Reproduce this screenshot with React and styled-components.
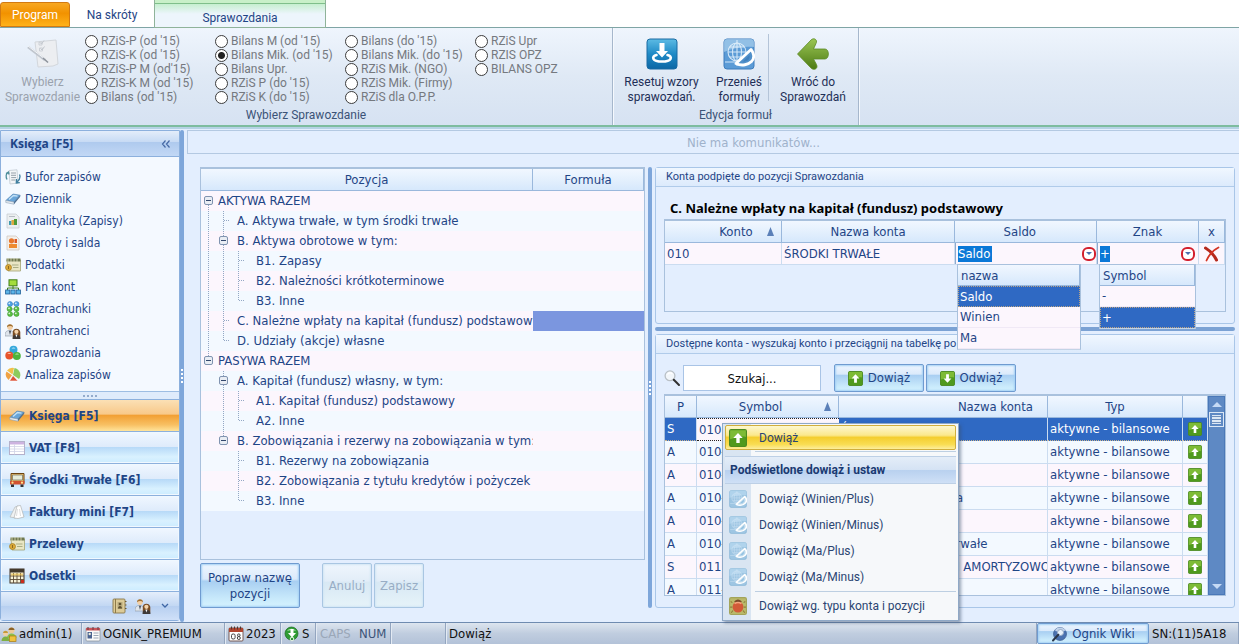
import React from 'react';
import styled, { createGlobalStyle, css } from 'styled-components';

const tahoma = '"DejaVu Sans Condensed", Tahoma, "DejaVu Sans", sans-serif';
const segoe = 'Roboto, "Segoe UI", "Open Sans", sans-serif';
const ink = '#1f4586';

const Global = createGlobalStyle`
  *, *::before, *::after { box-sizing: border-box; }
  body { margin: 0; font: 13px/16px ${tahoma}; color: ${ink}; background: #e3eefe; }
  button, input { font: inherit; color: inherit; margin: 0; }
  button { padding: 0; cursor: default; }
  table { border-collapse: separate; border-spacing: 0; table-layout: fixed; width: 100%; }
  svg { display: block; flex: none; }
`;

/* ---------- icons ---------- */

const Svg = ({ s = 16, children, v = 16 }) => (
  <svg width={s} height={s} viewBox={`0 0 ${v} ${v}`} aria-hidden="true">{children}</svg>
);

const BufferIcon = () => (
  <Svg>
    <path d="M4 1.500 12 .8 13 14 5 15z" fill="#f4f6f8" stroke="#b9c3cc" strokeWidth=".7" />
    <path d="M6 4h5M6 6.300h5M6.200 8.600h5M6.300 11h4" stroke="#8a959f" strokeWidth=".9" />
    <path d="M3.500 3.500C.5 4 .8 8 2 10.500M1 4.500 3.500 3 4 5.500" fill="none" stroke="#4f8f9b" strokeWidth="1.300" />
    <path d="M14.500 5.500C16 9 14.500 11 12 13M11.500 10 11.300 14l3.500-.3" fill="none" stroke="#3f7f9f" strokeWidth="1.300" />
  </Svg>
);
const BookIcon = () => (
  <Svg>
    <path d="M.8 9.500 8 3l7.200 1.200L9 11z" fill="#69a5d8" stroke="#4d7fae" strokeWidth=".6" />
    <path d="M.8 9.500 9 11v2.200L.8 11.500z" fill="#e9eef3" stroke="#8b9fb5" strokeWidth=".6" />
    <path d="M9 11l6.200-6.800v1.600L9 13.200z" fill="#4c6e93" />
    <path d="M4 8.500 8.500 4.500l4 .7" stroke="#c4e2f7" fill="none" strokeWidth="1.300" />
  </Svg>
);
const ChartDocIcon = () => (
  <Svg>
    <path d="M2 1h9l3 3v11H2z" fill="#eceff1" stroke="#c9ced3" strokeWidth=".8" />
    <path d="M4 8h2.500v4H4z" fill="#3f9bb0" />
    <path d="M6.500 7H9v5H6.500z" fill="#e0a83d" />
    <path d="M9 6h3v6H9z" fill="#4f9a3c" />
    <path d="M4 3.500h6" stroke="#b6bdc4" />
  </Svg>
);
const BalanceIcon = () => (
  <Svg>
    <path d="M2 1h9l3 3v11H2z" fill="#f3efe9" stroke="#cfc9c3" strokeWidth=".8" />
    <circle cx="6.500" cy="5.800" r="2.600" fill="#e8772c" />
    <path d="M4 9h8v4H4z" fill="#ee8a2f" />
    <path d="M9.500 4H12v4H9.500z" fill="#dc5a26" />
  </Svg>
);
const TaxIcon = () => (
  <Svg>
    <path d="M2 3h13.500v11H3z" fill="#e9e6c4" stroke="#a3a373" strokeWidth=".8" />
    <path d="M1.500 1.500h14v3h-14z" fill="#6f7850" />
    <path d="M3 1v4M6 1v4M9 1v4M12 1v4" stroke="#e2e0bb" strokeWidth=".8" />
    <path d="M7 8h6.500M8 10.500h5.500" stroke="#a9ad84" />
    <circle cx="3.500" cy="10.500" r="3" fill="#dba938" stroke="#a37b23" strokeWidth=".7" />
    <path d="M3.500 9v3" stroke="#8c6a20" />
  </Svg>
);
const PlanIcon = () => (
  <Svg>
    <rect x="4" y=".8" width="8" height="6" fill="#a4dd3c" stroke="#3f7d18" />
    <path d="M8 7v3M2.500 11V9h11v2" fill="none" stroke="#3f7d18" />
    <g fill="#5db4e8" stroke="#1d5e97" strokeWidth=".8">
      <rect x=".6" y="11" width="4.200" height="4" /><rect x="5.900" y="11" width="4.200" height="4" /><rect x="11.200" y="11" width="4.200" height="4" />
    </g>
  </Svg>
);
const BallsIcon = () => (
  <Svg>
    <path d="M5 3h6M5 8h6M5 13h6" stroke="#9aa" />
    <g fill="#4fa3e6" stroke="#2c72b8" strokeWidth=".5"><circle cx="5" cy="3" r="2.500" /><circle cx="11.500" cy="3" r="2.500" /></g>
    <g fill="#5cc043" stroke="#35902a" strokeWidth=".5"><circle cx="4.500" cy="8" r="2.500" /><circle cx="11.500" cy="8" r="2.500" /><circle cx="5" cy="13" r="2.500" /><circle cx="11.500" cy="13" r="2.500" /></g>
    <g fill="#fff" opacity=".8"><circle cx="4.300" cy="2.300" r=".9" /><circle cx="10.800" cy="2.300" r=".9" /><circle cx="4" cy="7.300" r=".9" /><circle cx="11" cy="7.300" r=".9" /><circle cx="4.300" cy="12.300" r=".9" /><circle cx="10.800" cy="12.300" r=".9" /></g>
  </Svg>
);
const PeopleIcon = () => (
  <Svg>
    <path d="M0 12.500c0-4 2-5 4.500-5s4 1 4.500 4v1.500H0z" fill="#dfe5ec" stroke="#8a95a2" strokeWidth=".6" />
    <path d="M3.800 7.800 5 12l1.200-4.200z" fill="#555d68" />
    <circle cx="5" cy="4.300" r="2.700" fill="#f2cfa5" />
    <path d="M2 4.300C1.600.2 8.300.2 8 4.300 6.500 2.800 4 2.600 2 4.300z" fill="#a2702f" />
    <path d="M7.800 14.500V9c0-4.500 7-4.500 7.500 0v5.500z" fill="#7a4c22" />
    <circle cx="11.400" cy="8.800" r="2.100" fill="#f4d4ac" />
    <path d="M7.500 16c0-3.200 1.500-4.300 3.900-4.300S15.500 12.800 15.500 16z" fill="#3f3a38" />
    <path d="M10.400 11.500 11.400 14.500l1.100-3z" fill="#fff" />
  </Svg>
);
const ReportsIcon = () => (
  <Svg>
    <circle cx="8.500" cy="4.800" r="4" fill="#34a8dc" /><circle cx="4.300" cy="10.500" r="4" fill="#e8542c" /><circle cx="11.800" cy="11" r="4" fill="#4db43c" />
    <path d="M6.500 3.500c1-1.500 3-1.500 4 0z" fill="#c7ebfa" /><path d="M2.300 9c1-1.500 3-1.500 4 0z" fill="#f9c3ae" /><path d="M10 9.500c1-1.500 3-1.500 4 0z" fill="#c8efbd" />
  </Svg>
);
const PieIcon = () => (
  <Svg>
    <path d="M7.500 7.500 2 3.500A7 7 0 0 1 9 1z" fill="#f2c04a" />
    <path d="M8 8 9.500 1a7 7 0 0 1 4.500 11z" fill="#8ccb5c" />
    <path d="M7 8.300 1.500 4.500a7 7 0 0 0 2 8.500z" fill="#f0a243" />
    <path d="M8 8.500 13 14H4.500z" fill="#dc5237" stroke="#fff" strokeWidth=".6" />
  </Svg>
);
const VatIcon = () => (
  <Svg>
    <rect x=".5" y="1.500" width="15" height="13" fill="#fff" stroke="#b4b1cb" />
    <path d="M1 2h14v2.500H1z" fill="#cdb3e0" />
    <path d="M1 6.500h14M1 9h14M1 11.500h14M5.500 4.500v10" stroke="#d0d3e6" strokeWidth=".8" />
  </Svg>
);
const BusIcon = () => (
  <Svg>
    <path d="M2 1.500h13v10H2z" fill="#eec069" stroke="#6b4313" />
    <path d="M3.500 3h10v5h-10z" fill="#e6ecda" stroke="#6c6c62" strokeWidth=".7" />
    <path d="M1 9h14.500v3.500H1z" fill="#d2532f" />
    <path d="M2 12.500h3V15H2zM11.500 12.500h3V15h-3z" fill="#333" />
    <circle cx="3.500" cy="10.700" r="1.100" fill="#ffe58b" /><circle cx="13" cy="10.700" r="1.100" fill="#ffe58b" />
  </Svg>
);
const InvoiceIcon = () => (
  <Svg>
    <path d="M1 13 6 3l3-1L7 14z" fill="#f0f2f2" stroke="#b5b9b9" strokeWidth=".7" />
    <path d="M5 14 8 2l3.500-.5L15 13l-6 1.500z" fill="#fff" stroke="#b0b3b3" strokeWidth=".7" />
    <path d="M8.500 5 7.500 12M10.500 5l1 7" stroke="#d5d7d7" strokeWidth=".8" />
  </Svg>
);
const CalendarGridIcon = () => (
  <Svg>
    <rect x="1" y="1" width="14" height="14" fill="#f7f2d8" stroke="#3f3022" />
    <path d="M1 1h14v3.500H1z" fill="#43392c" />
    <path d="M4.500 5v10M8 5v10M11.500 5v10M1 8h14M1 11.500h14" stroke="#5b4b36" strokeWidth=".9" />
    <path d="M2 5.500h12v2H2z" fill="#e9c04f" opacity=".7" /><path d="M12 12h3v3h-3z" fill="#cc2d1c" />
  </Svg>
);
const AddressIcon = () => (
  <Svg>
    <rect x="2" y="1" width="12" height="14" rx="1" fill="#dccb98" stroke="#8a784a" strokeWidth=".9" />
    <path d="M4.500 1v14" stroke="#8d7a48" /><path d="M14 3.500h1.500M14 7h1.500M14 10.500h1.500" stroke="#6d5b30" strokeWidth="1.200" />
    <rect x="6.500" y="4" width="5" height="7" fill="#b7aa7c" />
    <circle cx="9" cy="6" r="1.300" fill="#5f5130" /><path d="M7 10.500c0-3.500 4-3.500 4 0z" fill="#5f5130" />
  </Svg>
);
const AdminIcon = () => (
  <Svg>
    <circle cx="10.500" cy="4.500" r="3" fill="#eec998" /><path d="M7.500 4c0-3.500 6-3.500 6 0z" fill="#8c6326" />
    <path d="M6 12c0-6 9-6 9.500 0z" fill="#8fbf45" />
    <circle cx="4.500" cy="7.500" r="2.500" fill="#f2d0a4" /><path d="M2 7c.3-3 4.800-3 5 0z" fill="#c59a3c" />
    <path d="M.5 15c0-6 8-6 8 0z" fill="#7fb043" /><rect x="8.500" y="10" width="6.500" height="5.500" fill="#f0c23e" stroke="#a97c12" strokeWidth=".7" />
  </Svg>
);
const FirmIcon = () => (
  <Svg>
    <rect x="1" y="2" width="14" height="13" rx="1" fill="#fafafa" stroke="#8c95a0" strokeWidth=".8" />
    <path d="M1 2h14v2.500H1z" fill="#c9565a" /><path d="M3 1v3M13 1v3M8 1v3" stroke="#6c3940" />
    <rect x="2.500" y="6" width="4.500" height="6.500" fill="#4a6390" /><circle cx="4.700" cy="8" r="1.200" fill="#eed" />
    <path d="M8.500 7h5M8.500 9.500h5M8.500 12h5" stroke="#9aa6b5" />
  </Svg>
);
const DateIcon = () => (
  <Svg>
    <rect x="1" y="2" width="14" height="13" rx="1" fill="#fff" stroke="#6b4c45" strokeWidth=".9" />
    <path d="M1 2h14v4H1z" fill="#b2452f" /><path d="M3.500 .5v3M6.500 .5v3M9.500 .5v3M12.500 .5v3" stroke="#54362f" />
    <rect x="3.500" y="8" width="3.600" height="5" rx="1.500" fill="none" stroke="#444" />
    <circle cx="10.800" cy="9.200" r="1.300" fill="none" stroke="#444" /><circle cx="10.800" cy="12" r="1.500" fill="none" stroke="#444" />
  </Svg>
);
const SyncIcon = () => (
  <Svg>
    <circle cx="7.500" cy="7.500" r="6.500" fill="#2f9c33" stroke="#17681d" strokeWidth=".7" />
    <path d="M3 5c2-3 7-3 9 0-2-1-7-1-9 0z" fill="#a4e5a2" />
    <path d="M6.500 3h3v4h2.500L8 11.500 4 7h2.500z" fill="#fff" /><circle cx="8" cy="13" r="1.800" fill="none" stroke="#e8f5e8" />
  </Svg>
);
const WikiIcon = () => (
  <Svg>
    <circle cx="9" cy="8" r="6.500" fill="#4b72b0" stroke="#2f4f83" strokeWidth=".6" />
    <path d="M4 4c3-4 9-3 11 1-3-1-4 2-7 1S5 6 4 4z" fill="#c3d4ec" />
    <circle cx="9.500" cy="6.500" r="3" fill="#e9f2fb" stroke="#98aac4" />
    <path d="M7.300 8.800 2 14.500" stroke="#2b3648" strokeWidth="2" strokeLinecap="round" />
  </Svg>
);
const SearchIcon = () => (
  <Svg s={17} v={17}>
    <circle cx="6" cy="5.800" r="4.900" fill="#f2f6fa" stroke="#b9c0c6" strokeWidth="1.300" />
    <path d="M3.500 4.500C4.500 2.500 7 2.300 8.500 4" stroke="#fff" fill="none" strokeWidth="1.200" />
    <path d="M9.800 9.800 15 15" stroke="#303030" strokeWidth="2" strokeLinecap="round" />
  </Svg>
);
const ArrowBox = ({ down, s = 15 }) => (
  <Svg s={s}>
    <rect x=".5" y=".5" width="15" height="15" rx="1.500" fill="#4f9a1d" stroke="#4b8a20" />
    <path d="M1 1h14v6C10 6 6 8 1 9z" fill="#8cc63f" opacity=".75" />
    <path d={down ? 'M6.500 3.500h3V8h2.700L8 12.500 3.800 8h2.700z' : 'M6.500 12.500h3V8h2.700L8 3.500 3.800 8h2.700z'} fill="#fff" />
  </Svg>
);
const RedXIcon = () => (
  <Svg>
    <path d="M1.500 2C5 4 10 9 12.500 14" stroke="#b5281b" strokeWidth="3" fill="none" strokeLinecap="round" />
    <path d="M14.500 1.500C9 4 5 9 2.500 14.500" stroke="#d33423" strokeWidth="1.800" fill="none" strokeLinecap="round" />
  </Svg>
);
const GlobeSheetIcon = ({ s = 18, soft }) => (
  <Svg s={s} v={32}>
    <rect x="1" y="1" width="30" height="30" rx="3" fill={soft ? '#9ec6e3' : '#5b9bd6'} stroke={soft ? '#7fb0d2' : '#3f7dbd'} />
    <path d="M1 14V4a3 3 0 0 1 3-3h24a3 3 0 0 1 3 3v5C20 8 10 10 1 14z" fill="#c0def4" opacity=".55" />
    <g fill="none" stroke="#e8f4fd" strokeWidth="1.100" opacity={soft ? '.5' : '.85'}>
      <circle cx="14" cy="14" r="9" /><ellipse cx="14" cy="14" rx="4.500" ry="9" /><path d="M5 14h18M6.500 9h15M6.500 19h15M14 2v26M2 24h20" />
    </g>
    <path d="M13 25.500 28 11.500c3.500 4 3.500 9 .5 12S19 28.500 13 25.500z" fill={soft ? '#bcd9ec' : '#4f8fca'} stroke="#fff" strokeWidth="2.800" strokeLinejoin="round" />
    <path d="M20 23.500 26.500 17c.8 4.500-2 6.500-6.500 6.500z" fill={soft ? '#8fbfe0' : '#3f80be'} />
  </Svg>
);
const BugIcon = () => (
  <Svg s={18}>
    <rect x=".5" y=".5" width="15" height="15" rx="1.500" fill="#b9b96a" stroke="#a3a45a" />
    <path d="M3 5 1.500 4M13 5l1.500-1M3 9H1M13 9h2M3.500 12 2 14M12.500 12l1.500 2" stroke="#8e7c3a" />
    <ellipse cx="8" cy="8.800" rx="4.800" ry="5" fill="#d25a38" /><path d="M4.500 4.500c1.500-3 5.500-3 7 0z" fill="#7b4b2b" />
    <path d="M5 6c2-1.500 4-1.500 6 0" stroke="#f4a47f" fill="none" strokeWidth="1.200" />
  </Svg>
);
const ResetIcon = () => (
  <Svg s={32} v={32}>
    <defs><linearGradient id="rst" x1="0" y1="0" x2="0" y2="1"><stop offset="0" stopColor="#5dbbe4" /><stop offset=".5" stopColor="#1f8ac6" /><stop offset="1" stopColor="#0c67a5" /></linearGradient></defs>
    <rect x="1" y="1" width="30" height="30" rx="3" fill="url(#rst)" stroke="#1a6ba3" />
    <path d="M13.500 5h5v8h3.500L16 19.500 10 13h3.500z" fill="#fff" />
    <path d="M10.500 17C5 18.500 6 23.500 16 23.500s11-5 5.500-6.500" fill="none" stroke="#fff" strokeWidth="2.600" strokeLinecap="round" />
  </Svg>
);
const BackIcon = () => (
  <Svg s={34} v={34}>
    <defs><linearGradient id="bck" x1="0" y1="0" x2="0" y2="1"><stop offset="0" stopColor="#9bc654" /><stop offset="1" stopColor="#4c7a14" /></linearGradient></defs>
    <path d="M1.500 17 15 3c3-3 7 0 5 3.500L17.500 12H29c4.500 0 4.500 10 0 10H17.500l3 5.500c2 4-2.500 6.500-5.500 3.500z" fill="url(#bck)" stroke="#5c8a24" strokeWidth=".8" />
  </Svg>
);
const ChecklistIcon = () => (
  <Svg s={32} v={32}>
    <path d="M8 4 29 2l2 24-5 2-15 1z" fill="#eceef1" stroke="#d3d7dc" />
    <path d="M12 4h3v3h-3zM12.500 10h3v3h-3z" fill="none" stroke="#ccd0d6" />
    <path d="m13 4.500 1.500 1.500L17 2.500M13.500 10.500l1.500 1.500 2.500-3.500" stroke="#c2c7ce" fill="none" />
    <path d="M1 9 18 22" stroke="#c0c6ce" strokeWidth="2.600" /><path d="m1 8 17 13" stroke="#f3f5f8" /><path d="m16 20 5 4.500" stroke="#8c929b" strokeWidth="1.600" />
  </Svg>
);
const SortUp = () => (
  <svg width="7" height="9" viewBox="0 0 7 9" aria-hidden="true"><path d="M3.500 0 7 9H0z" fill="#5b80b8" /></svg>
);
const Caret = ({ up, c = '#c5daf5', w = 10 }) => (
  <svg width={w} height={w / 2} viewBox="0 0 10 5" aria-hidden="true"><path d={up ? 'M5 0l5 5H0z' : 'M0 0h10L5 5z'} fill={c} /></svg>
);
const Chevrons = () => (
  <Svg s={10} v={10}><path d="M4.500 1.500 1.500 5l3 3.500M8.500 1.500 5.500 5l3 3.500" fill="none" stroke="#4669a5" strokeWidth="1.200" /></Svg>
);

/* ---------- ribbon ---------- */

const Page = styled.div`
  display: flex; flex-direction: column; height: 100vh; min-height: 600px; overflow: hidden;
`;
const Tabs = styled.nav`
  display: flex; align-items: stretch; height: 28px; background: #fff; flex: none;
  border-bottom: 1px solid #7fa5a5; font: 12px/24px ${segoe};
`;
const Tab = styled.button`
  border: 0; background: none; margin-top: 2px; line-height: 26px; width: 84px;
  ${p => p.$kind === 'program' && css`
    width: 70px; color: #fff; line-height: 24px; border: 1px solid #d27a12; border-radius: 3px 3px 0 0;
    background: linear-gradient(#f7a823, #f29200 45%, #ffb21a);
  `}
  ${p => p.$kind === 'active' && css`
    width: 172px; margin: 0 0 -1px; border: 1px solid #8fb39a; border-top: 0;
    background: linear-gradient(#c8f0c8 0 3px, #7fbf8a 3px 4px, #c6efcf 4px, #edf5fc 14px);
    padding-top: 5px;
  `}
`;
const Ribbon = styled.section`
  display: flex; height: 99px; background: linear-gradient(#eff5fd, #dfe9f5 50%, #d6e2f2);
  border-bottom: 2px solid #7dbc9f; box-shadow: 0 2px #b4d2e4; margin-bottom: 3px; flex: none;
  font: 12px/15px ${segoe};
`;
const Group = styled.div`
  display: flex; flex-direction: column; border-right: 1px solid #a6b7cc;
  box-shadow: 1px 0 #f5f9fe; width: ${p => p.$w}px;
`;
const GroupBody = styled.div` display: flex; flex: 1; padding-top: 6px; `;
const GroupLabel = styled.div` text-align: center; line-height: 20px; color: #3b5377; `;
const BigButton = styled.button`
  border: 0; background: none; width: ${p => p.$w}px; display: flex; flex-direction: column;
  align-items: center; line-height: 15px; color: #1e2f57; padding-top: 3px; gap: 4px;
  &:disabled { color: #9aa2ad; }
`;
const BigIcon = styled.span` height: 34px; display: grid; place-items: center; `;
const ThinSep = styled.span` width: 1px; background: #b4c4d8; margin-bottom: 4px; `;
const Radios = styled.fieldset`
  border: 0; margin: 0; padding: 0; display: grid; grid-auto-flow: column;
  grid-template-rows: repeat(5, 14px); grid-auto-columns: 130px;
`;
const Radio = styled.label`
  display: flex; align-items: center; gap: 3px; color: #75797f; line-height: 14px; white-space: nowrap;
  input {
    appearance: none; width: 13px; height: 13px; border: 1px solid #3c3c3c; border-radius: 50%;
    background: #fff; flex: none;
  }
  input:checked { background: radial-gradient(#222 0 3px, #fff 4px); }
`;

/* ---------- sidebar ---------- */

const Body = styled.div` display: flex; flex: 1; min-height: 0; `;
const Sidebar = styled.aside`
  width: 180px; flex: none; display: flex; flex-direction: column; margin-bottom: 1px; font-size: 12px;
  border: 1px solid #8cb0dd; border-radius: 0 0 3px 3px; background: #f4f9ff;
`;
const SideHead = styled.header`
  display: flex; justify-content: space-between; align-items: center; height: 26px; padding: 0 8px 0 9px;
  font: bold 12px/20px "Open Sans", ${segoe}; border-bottom: 1px solid #8cb0dd;
  background: linear-gradient(#e3edfa, #c6daf4 45%, #afcaee 46%, #c2d8f5);
  button { border: 0; background: none; }
`;
const SideList = styled.ul`
  list-style: none; margin: 0; padding: 9px 0 0; flex: 1;
`;
const SideLink = styled.a`
  display: flex; align-items: center; gap: 4px; height: 22px; padding-left: 4px; color: ${ink}; text-decoration: none;
`;
const Grip = styled.div`
  height: 8px; border-top: 1px solid #9dbde3; background: #dfebfb; display: grid; place-items: center;
  &::after { content: ''; width: 14px; height: 2px; background: repeating-linear-gradient(90deg, #94abcc 0 2px, transparent 2px 4px); }
`;
const NavButton = styled.button`
  display: flex; align-items: center; gap: 4px; height: 32px; padding-left: 8px; border: 0; border-top: 1px solid #8cb0dd;
  font-weight: bold; text-align: left;
  box-shadow: inset 0 0 0 1px #f0f8ff;
  background: linear-gradient(#f0f7ff, #deebfb 48%, #b8daf8 50%, #d9f1ff 80%, #ccecff);
  ${p => p.$on && css`
    box-shadow: none;
    background: linear-gradient(#fbe0b5, #f8c98a 45%, #f2a034 50%, #f8c063 80%, #ffe49b);
  `}
`;
const SideFoot = styled.footer`
  display: flex; justify-content: flex-end; align-items: center; gap: 8px; height: 29px; padding-right: 8px;
  border-top: 1px solid #8cb0dd; background: linear-gradient(#e5eefb, #c2d7f3 50%, #b7cff0 51%, #cfe0f8);
  button { border: 0; background: none; }
`;
const VSplit = styled.div`
  width: 4px; flex: none; background: #7ea6da; display: grid; place-items: center; border-radius: 2px;
  &::after { content: ''; width: 2px; height: 14px; background: repeating-linear-gradient(#fff 0 2px, transparent 2px 4px); }
`;
const HSplit = styled.div` height: 4px; flex: none; background: #7ba2d4; border-radius: 2px; `;

/* ---------- work area ---------- */

const Main = styled.main` flex: 1; min-width: 0; display: flex; flex-direction: column; margin-left: 3px; `;
const Message = styled.div`
  height: 24px; line-height: 24px; border: 1px solid #b4c9e2; border-right: 0; padding-left: 80px; text-align: center; color: #9fb2cb; flex: none;
`;
const Work = styled.div`
  flex: 1; min-height: 0; display: grid; gap: 3px; padding: 13px 4px 14px 13px;
  grid-template-columns: minmax(0, 445fr) 4px minmax(0, 580fr); grid-template-rows: minmax(0, 1fr);
`;
const Column = styled.div` display: flex; flex-direction: column; gap: 3px; min-height: 0; min-width: 0; `;

const GridBox = styled.div`
  border: 1px solid #a9c1dd; border-top-width: 2px; flex: ${p => (p.$h ? 'none' : '1')}; min-height: ${p => p.$h || 0}px;
  overflow: ${p => (p.$open ? 'visible' : 'hidden')}; display: flex; align-items: flex-start;
`;
const Th = styled.th`
  height: 22px; padding: 0 ${p => p.$end || 0}px 0 0; font-weight: normal; text-align: ${p => (p.$end ? 'right' : 'center')};
  border-right: 1px solid #9ab8dc; border-bottom: 1px solid #9ab8dc;
  background: linear-gradient(#f1f7ff, #e4f0fd 50%, #d6e8fc);
`;
const HeadFlex = styled.span`
  display: flex; justify-content: center; align-items: center; padding-left: ${p => p.$l}px; padding-right: 7px;
  span { flex: 1; text-align: center; }
`;
const TreeRow = styled.tr` background: ${p => (p.$odd ? '#f3f9ff' : '#fcf6fd')}; `;
const TreeCell = styled.td` padding: 0; height: 20px; background: ${p => (p.$on ? '#7b96df' : 'none')}; `;
const TreeLine = styled.div` display: flex; overflow: hidden; `;
const TreeText = styled.span` line-height: 20px; padding-left: ${p => 2 + 4 * p.$level}px; white-space: nowrap; `;

const Button = styled.button`
  border: 1px solid #6f9bd0; border-radius: 2px; box-shadow: inset 0 0 2px 1px #a5d0f4; color: ${ink};
  background: linear-gradient(#eef6ff, #dbeafb 35%, #a9cff2 40%, #c8e9fb 80%, #d5f3ff);
  width: ${p => p.$w}px; height: ${p => p.$h || 28}px; display: inline-flex; align-items: center; justify-content: center; gap: 5px;
  &:disabled { color: #98adc5; border-color: #a9c6e2; box-shadow: inset 0 0 2px 1px #d2e6f4; background: linear-gradient(#eff6fd, #e2edf8 40%, #d8e8f4 42%, #e6f3f9); }
`;
const Buttons = styled.div` display: flex; gap: ${p => p.$gap}px; `;

const Panel = styled.section`
  border: 1px solid #a9c6e8; border-radius: 3px; display: flex; flex-direction: column; min-height: 0;
  flex: ${p => (p.$fill ? '1' : 'none')};
`;
const PanelHead = styled.h2`
  margin: 0; font: 11px/18px ${segoe}; height: 19px; padding-left: 10px; border-bottom: 1px solid #b0cbea; flex: none;
  background: linear-gradient(#f0f7ff, #dceafc); white-space: nowrap; overflow: hidden;
`;
const PanelBody = styled.div`
  flex: 1; min-height: 0; display: flex; flex-direction: column; padding: ${p => p.$top}px 8px 11px; gap: 2px; position: relative;
`;
const Title = styled.h3` margin: 0 0 0 6px; font: bold 13px/18px "Noto Sans", ${segoe}; color: #000; `;

const Td = styled.td`
  height: ${p => p.$h || 22}px; padding: 0 2px; border-right: 1px solid #cbdcf0; border-bottom: 1px solid #cbdcf0;
  white-space: nowrap; overflow: hidden;
  ${p => p.$plain && css` overflow: visible; padding: 0; `}
`;
const PinkRow = styled.tr` background: #fcf6fd; `;
const Editor = styled.div`
  position: relative; display: flex; align-items: center; justify-content: space-between; height: 21px; padding-left: 2px;
  border-left: 1px solid #8fa9cc;
  > input { border: 0; padding: 0; width: ${p => p.$w}px; height: 16px; background: #0b78d7; color: #fff; outline: 0; }
`;
const DropButton = styled.button`
  width: 14px; height: 14px; border: 2px solid #d3202e; border-radius: 6px; background: #fff;
  display: grid; place-items: center; margin-right: ${p => p.$r}px;
`;
const Popup = styled.div`
  position: absolute; z-index: 2; left: 1px; top: 21px; width: ${p => p.$w}px; background: #fcf6fd;
  border: 1px solid #a9c1dd; border-bottom-color: #c3d3e6;
`;
const PopupHead = styled.div`
  height: 21px; line-height: 21px; padding-left: 3px; border: 1px solid #9ab8dc; border-width: 0 1px 1px 0;
  background: linear-gradient(#f1f7ff, #d6e8fc);
`;
const Option = styled.div`
  height: 21px; line-height: 20px; padding-left: 2px; border-bottom: 1px solid #f0e9f6;
  ${p => p.$on && css` background: #2f69c3; color: #fff; border: 1px dotted #b9a385; padding-left: 1px; line-height: 19px; `}
`;
const CenterCell = styled.span` display: flex; justify-content: center; `;
const IconButton = styled.button` border: 0; background: none; display: block; `;

const Toolbar = styled.div` display: flex; align-items: center; height: 28px; `;
const SearchLabel = styled.label` display: flex; align-items: center; gap: 2px; margin-right: 13px; `;
const SearchInput = styled.input`
  width: 138px; height: 26px; border: 1px solid #a9c4e6; background: #fff; text-align: center; outline: 0;
  &::placeholder { color: #111; opacity: 1; }
`;
const AccountRow = styled.tr`
  background: ${p => (p.$odd ? '#f3f9ff' : '#fcf6fd')};
  ${p => p.$on && css`
    background: #2f69c3; color: #fff;
    td { border-bottom: 1px dotted #c9b28a; }
    td:nth-child(2) { background: #fcf6fd; color: ${ink}; border: 1px dotted #222; border-width: 1px 0; }
  `}
`;
const Scroll = styled.div`
  width: 17px; flex: none; align-self: stretch; background: #5e89c4; border: 1px solid #4a78b8;
  display: flex; flex-direction: column; align-items: center; gap: 5px; padding: 5px 0;
`;
const Thumb = styled.div`
  width: 15px; height: 15px; border: 1px solid #dbe7f5; margin-bottom: auto; padding: 2px;
  background: repeating-linear-gradient(#dce7f4 0 1px, #6f8fbc 1px 2px, #dce7f4 2px 3px) content-box #dce7f4;
`;
const TableWrap = styled.div` flex: 1; min-width: 0; `;

/* ---------- context menu ---------- */

const Menu = styled.div`
  position: absolute; left: 66px; top: 69px; z-index: 3; width: 237px; padding: 1px 2px; font: 12px/16px ${segoe};
  border: 1px solid #8fa8c6; background: linear-gradient(90deg, #d9e5f2 28px, #f6f8fa 28px);
  box-shadow: 2px 2px 3px rgba(60, 80, 110, .5);
`;
const MenuItem = styled.button`
  display: flex; align-items: center; gap: 12px; width: 100%; height: ${p => (p.$hot ? 25 : 26)}px; border: 1px solid transparent;
  background: none; padding-left: 3px; color: #2b4572; white-space: nowrap;
  ${p => p.$hot && css`
    border-color: #d0ae3c; border-radius: 2px;
    background: linear-gradient(#fdf7cf, #fbe88c 40%, #f4ce2f 50%, #f9dd53 80%, #fdee9c);
  `}
`;
const MenuSep = styled.div` height: 1px; margin: 1px 0 1px 30px; background: #bdcfe2; `;
const MenuHead = styled.div`
  height: 28px; line-height: 26px; margin: 4px 0 2px; padding-left: 5px; font-weight: bold; color: #1a3a72; border: 1px solid #bdd0e6; border-width: 1px 0;
  background: linear-gradient(#e4edf8, #d5e3f4 48%, #b9d1ef 52%, #cfe0f6);
`;

/* ---------- status bar ---------- */

const Status = styled.footer`
  display: flex; align-items: stretch; height: 22px; flex: none; color: #111; line-height: 21px;
  border-top: 1px solid #6f8bb0; background: linear-gradient(#dde5ef, #c0cddf 50%, #b3c2d8);
`;
const Cell = styled.div`
  display: flex; align-items: center; gap: 2px; padding-left: ${p => p.$l || 3}px; border-right: 1px solid #93a5bf; box-shadow: 1px 0 #e3eaf3;
  width: ${p => p.$w}px; white-space: nowrap; color: ${p => p.$c || 'inherit'};
  ${p => p.$grow && css` flex: 1; `}
`;
const Dim = styled.span` color: #9aa7b8; width: 38px; padding-left: 1px; `;

/* ---------- data ---------- */

const radios = [
  "RZiS-P (od '15)", "RZiS-K (od '15)", "RZiS-P M (od'15)", "RZiS-K M (od '15)", "Bilans (od '15)",
  "Bilans M (od '15)", "Bilans Mik. (od '15)", 'Bilans Upr.', "RZiS P (do '15)", "RZiS K (do '15)",
  "Bilans (do '15)", "Bilans Mik. (do '15)", 'RZiS Mik. (NGO)', 'RZiS Mik. (Firmy)', 'RZiS dla O.P.P.',
  'RZiS Upr', 'RZIS OPZ', 'BILANS OPZ',
];
const sideItems = [
  ['Bufor zapisów', BufferIcon], ['Dziennik', BookIcon], ['Analityka (Zapisy)', ChartDocIcon], ['Obroty i salda', BalanceIcon],
  ['Podatki', TaxIcon], ['Plan kont', PlanIcon], ['Rozrachunki', BallsIcon], ['Kontrahenci', PeopleIcon],
  ['Sprawozdania', ReportsIcon], ['Analiza zapisów', PieIcon],
];
const navItems = [
  ['Księga [F5]', BookIcon], ['VAT [F8]', VatIcon], ['Środki Trwałe [F6]', BusIcon], ['Faktury mini [F7]', InvoiceIcon],
  ['Przelewy', TaxIcon], ['Odsetki', CalendarGridIcon],
];
/* guide codes: v line, t tee, l elbow, _ blank, a/b/c expander joined below / above / both */
const tree = [
  ['a', 'AKTYWA RAZEM'], ['vt', 'A. Aktywa trwałe, w tym środki trwałe'], ['vc', 'B. Aktywa obrotowe w tym:'],
  ['vvt', 'B1. Zapasy'], ['vvt', 'B2. Należności krótkoterminowe'], ['vvl', 'B3. Inne'],
  ['vt', 'C. Należne wpłaty na kapitał (fundusz) podstawowy'], ['vl', 'D. Udziały (akcje) własne'],
  ['b', 'PASYWA RAZEM'], ['_c', 'A. Kapitał (fundusz) własny, w tym:'], ['_vt', 'A1. Kapitał (fundusz) podstawowy'], ['_vl', 'A2. Inne'],
  ['_b', 'B. Zobowiązania i rezerwy na zobowiązania w tym:'], ['__t', 'B1. Rezerwy na zobowiązania'],
  ['__t', 'B2. Zobowiązania z tytułu kredytów i pożyczek'], ['__l', 'B3. Inne'],
];
const accounts = [
  ['S', '010', 'ŚRODKI TRWAŁE'], ['A', '010-', ''], ['A', '010-', ''],
  ['A', '010-', 'Maszyny, urządzenia'], ['A', '010-', ''], ['A', '010-', 'Niskocenne środki trwałe'],
  ['S', '011', 'ŚRODKI TRWAŁE W I AMORTYZOWO'], ['A', '011-', ''],
];

const Guide = ({ code }) => {
  const up = 'vtlbc'.includes(code), down = 'vtac'.includes(code), side = 'tl'.includes(code), box = 'abc'.includes(code);
  return (
    <svg width="15" height="20" viewBox="0 0 15 20" aria-hidden="true">
      <g stroke="#93a7c4" strokeDasharray="1 1">
        {up && <path d="M7.500 0V10" />}
        {down && <path d="M7.500 10V20" />}
        {side && <path d="M8 9.500h6" />}
      </g>
      {box && <g><rect x="3.500" y="5.500" width="8" height="8" rx="1.500" fill="#e9edf4" stroke="#8093b0" /><path d="M5 9.500h5" stroke="#33486d" /></g>}
    </svg>
  );
};

export default function App() {
  return (
    <Page>
      <Global />
      <Tabs>
        <Tab $kind="program">Program</Tab>
        <Tab>Na skróty</Tab>
        <Tab $kind="active">Sprawozdania</Tab>
      </Tabs>
      <Ribbon>
        <Group $w={613}>
          <GroupBody>
            <BigButton $w={85} disabled><BigIcon><ChecklistIcon /></BigIcon><span>Wybierz<br />Sprawozdanie</span></BigButton>
            <Radios>
              {radios.map((r, i) => <Radio key={r}><input type="radio" name="report" defaultChecked={i === 6} />{r}</Radio>)}
            </Radios>
          </GroupBody>
          <GroupLabel>Wybierz Sprawozdanie</GroupLabel>
        </Group>
        <Group $w={246}>
          <GroupBody>
            <BigButton $w={97}><BigIcon><ResetIcon /></BigIcon><span>Resetuj wzory<br />sprawozdań.</span></BigButton>
            <BigButton $w={58}><BigIcon><GlobeSheetIcon s={32} /></BigIcon><span>Przenieś<br />formuły</span></BigButton>
            <ThinSep />
            <BigButton $w={88}><BigIcon><BackIcon /></BigIcon><span>Wróć do<br />Sprawozdań</span></BigButton>
          </GroupBody>
          <GroupLabel>Edycja formuł</GroupLabel>
        </Group>
      </Ribbon>

      <Body>
        <Sidebar>
          <SideHead>Księga [F5]<button aria-label="Zwiń"><Chevrons /></button></SideHead>
          <SideList>
            {sideItems.map(([t, I]) => <li key={t}><SideLink href="#"><I />{t}</SideLink></li>)}
          </SideList>
          <Grip />
          {navItems.map(([t, I], i) => <NavButton key={t} $on={i === 0}><I />{t}</NavButton>)}
          <SideFoot>
            <button aria-label="Adresy"><AddressIcon /></button>
            <button aria-label="Kontrahenci"><PeopleIcon /></button>
            <button aria-label="Więcej"><Svg s={12} v={12}><path d="m3 4 3 3 3-3" fill="none" stroke="#3f66a5" strokeWidth="1.300" /></Svg></button>
          </SideFoot>
        </Sidebar>
        <VSplit />
        <Main>
          <Message>Nie ma komunikatów...</Message>
          <Work>
            <Column>
              <GridBox>
                <table>
                  <colgroup><col /><col width="111" /></colgroup>
                  <thead><tr><Th>Pozycja</Th><Th>Formuła</Th></tr></thead>
                  <tbody>
                    {tree.map(([g, t], i) => (
                      <TreeRow key={i} $odd={i % 2 === 1}>
                        <TreeCell><TreeLine>{[...g].map((c, k) => <Guide key={k} code={c} />)}<TreeText $level={g.length - 1}>{t}</TreeText></TreeLine></TreeCell>
                        <TreeCell $on={i === 6} />
                      </TreeRow>
                    ))}
                  </tbody>
                </table>
              </GridBox>
              <Buttons $gap={22}>
                <Button $w={100} $h={45}>Popraw nazwę<br />pozycji</Button>
                <Buttons $gap={2}>
                  <Button $w={50} $h={45} disabled>Anuluj</Button>
                  <Button $w={50} $h={45} disabled>Zapisz</Button>
                </Buttons>
              </Buttons>
            </Column>
            <VSplit />
            <Column>
              <Panel>
                <PanelHead>Konta podpięte do pozycji Sprawozdania</PanelHead>
                <PanelBody $top={12}>
                  <Title>C. Należne wpłaty na kapitał (fundusz) podstawowy</Title>
                  <GridBox $h={93} $open>
                    <table>
                      <colgroup><col width="117" /><col /><col width="142" /><col width="102" /><col width="26" /></colgroup>
                      <thead>
                        <tr><Th><HeadFlex $l={40}><span>Konto</span><SortUp /></HeadFlex></Th><Th>Nazwa konta</Th><Th $end={60}>Saldo</Th><Th>Znak</Th><Th>x</Th></tr>
                      </thead>
                      <tbody>
                        <PinkRow>
                          <Td>010</Td><Td>ŚRODKI TRWAŁE</Td>
                          <Td $plain>
                            <Editor $w={34}>
                              <input defaultValue="Saldo" aria-label="Saldo" /><DropButton $r={0} aria-label="Rozwiń saldo"><Caret c="#4b6fae" w={6} /></DropButton>
                              <Popup $w={124} role="listbox" aria-label="Saldo">
                                <PopupHead>nazwa</PopupHead>
                                <Option role="option" $on>Saldo</Option><Option role="option">Winien</Option><Option role="option">Ma</Option>
                              </Popup>
                            </Editor>
                          </Td>
                          <Td $plain>
                            <Editor $w={10}>
                              <input defaultValue="+" aria-label="Znak" /><DropButton $r={3} aria-label="Rozwiń znak"><Caret c="#4b6fae" w={6} /></DropButton>
                              <Popup $w={97} role="listbox" aria-label="Znak">
                                <PopupHead>Symbol</PopupHead>
                                <Option role="option">-</Option><Option role="option" $on>+</Option>
                              </Popup>
                            </Editor>
                          </Td>
                          <Td><CenterCell><IconButton aria-label="Usuń"><RedXIcon /></IconButton></CenterCell></Td>
                        </PinkRow>
                      </tbody>
                    </table>
                  </GridBox>
                </PanelBody>
              </Panel>
              <HSplit />
              <Panel $fill>
                <PanelHead>Dostępne konta - wyszukaj konto i przeciągnij na tabelkę po</PanelHead>
                <PanelBody $top={10}>
                  <Toolbar>
                    <SearchLabel><SearchIcon /><SearchInput placeholder="Szukaj..." aria-label="Szukaj" /></SearchLabel>
                    <Buttons $gap={2}>
                      <Button $w={90}><ArrowBox />Dowiąż</Button>
                      <Button $w={90}><ArrowBox down />Odwiąż</Button>
                    </Buttons>
                  </Toolbar>
                  <GridBox>
                    <TableWrap>
                      <table>
                        <colgroup><col width="32" /><col width="142" /><col /><col width="135" /><col width="25" /></colgroup>
                        <thead>
                          <tr><Th>P</Th><Th><HeadFlex $l={0}><span>Symbol</span><SortUp /></HeadFlex></Th><Th $end={14}>Nazwa konta</Th><Th>Typ</Th><Th aria-label="Akcja" /></tr>
                        </thead>
                        <tbody>
                          {accounts.map(([p, s, n], i) => (
                            <AccountRow key={i} $on={i === 0} $odd={i % 2 === 1}>
                              <Td $h={23}>{p}</Td><Td $h={23}>{s}</Td><Td $h={23}>{n}</Td><Td $h={23}>aktywne - bilansowe</Td>
                              <Td $h={23}><CenterCell><IconButton aria-label="Dowiąż konto"><ArrowBox s={14} /></IconButton></CenterCell></Td>
                            </AccountRow>
                          ))}
                        </tbody>
                      </table>
                    </TableWrap>
                    <Scroll><Caret up /><Thumb /><Caret /></Scroll>
                  </GridBox>
                  <Menu role="menu">
                    <MenuItem role="menuitem" $hot><ArrowBox s={18} />Dowiąż</MenuItem>
                    <MenuSep />
                    <MenuHead>Podświetlone dowiąż i ustaw</MenuHead>
                    {['Winien/Plus', 'Winien/Minus', 'Ma/Plus', 'Ma/Minus'].map(t => (
                      <MenuItem role="menuitem" key={t}><GlobeSheetIcon soft />Dowiąż ({t})</MenuItem>
                    ))}
                    <MenuSep />
                    <MenuItem role="menuitem"><BugIcon />Dowiąż wg. typu konta i pozycji</MenuItem>
                  </Menu>
                </PanelBody>
              </Panel>
            </Column>
          </Work>
        </Main>
      </Body>

      <Status>
        <Cell $w={82} $l={1}><AdminIcon />admin(1)</Cell>
        <Cell $w={143}><FirmIcon />OGNIK_PREMIUM</Cell>
        <Cell $w={56}><DateIcon />2023</Cell>
        <Cell $w={35}><SyncIcon />S</Cell>
        <Cell $w={75} $c="#3c5478"><Dim>CAPS</Dim>NUM</Cell>
        <Cell $w={55} />
        <Cell $grow>Dowiąż</Cell>
        <Button $w={112} $h={21}><WikiIcon />Ognik Wiki</Button>
        <Cell $w={90}>SN:(11)5A18</Cell>
      </Status>
    </Page>
  );
}
